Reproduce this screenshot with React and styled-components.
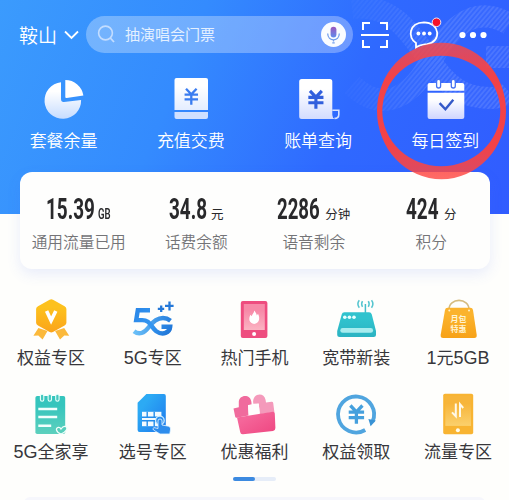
import React from "react"
import styled, { createGlobalStyle } from "styled-components"

const GlobalStyle = createGlobalStyle`
  * {
    box-sizing: border-box;
  }

  body {
    margin: 0;
    overflow: hidden;
    background: #fefefc;
    font-family: "Noto Sans CJK SC", sans-serif;
  }
`

const Page = styled.div`
  width: 509px;
  height: 500px;
  position: relative;
  overflow: hidden;
  background: #fefefc;
`

const Header = styled.header`
  height: 214px;
  position: relative;
  background: linear-gradient(112deg, #3b9bfd 0%, #348bfe 35%, #2f69ff 66%, #315cff 100%);
`

const HeaderArt = styled.svg`
  position: absolute;
  top: 0;
  right: 0;
`

const TopBar = styled.div`
  height: 69px;
  position: relative;
  display: flex;
  align-items: center;
  padding: 0 20px 0 19px;
`

const City = styled.div`
  display: flex;
  align-items: center;
  gap: 7px;
  width: 67px;
  color: #fff;
  font-size: 19px;
  font-weight: 350;
  line-height: 28px;
`

const SearchBox = styled.div`
  width: 267px;
  height: 37px;
  display: flex;
  align-items: center;
  padding: 0 7px 0 11px;
  border-radius: 19px;
  background: rgba(255, 255, 255, 0.3);
`

const SearchText = styled.span`
  flex: 1;
  margin: -2px 0 0 9px;
  color: #e4f0ff;
  font-size: 15px;
  line-height: 22px;
`

const Tools = styled.div`
  display: flex;
  align-items: center;
  margin-left: 8px;

  svg {
    display: block;
    overflow: visible;
  }
`

const Actions = styled.nav`
  position: relative;
  display: grid;
  grid-template-columns: repeat(4, 1fr);
  padding-top: 8px;
`

const Item = styled.div`
  display: flex;
  flex-direction: column;
  align-items: center;

  svg {
    display: block;
    overflow: visible;
  }
`

const ItemLabel = styled.span`
  margin-top: ${({ $gap }) => $gap}px;
  color: ${({ $light }) => ($light ? "#fff" : "#37373b")};
  font-size: 17px;
  font-weight: ${({ $light }) => ($light ? 350 : 400)};
  line-height: 24px;
  white-space: nowrap;

  b {
    font-family: "Liberation Sans", sans-serif;
    font-size: 18px;
    font-weight: 400;
  }
`

const Usage = styled.section`
  position: relative;
  display: grid;
  grid-template-columns: repeat(4, 1fr);
  width: 470px;
  height: 97px;
  margin: -42px 0 0 20px;
  padding-top: 22px;
  border-radius: 12px;
  background: #fefefd;
  box-shadow: 0 5px 14px rgba(70, 110, 240, 0.12);
`

const Stat = styled.div`
  display: flex;
  flex-direction: column;
  align-items: center;
`

const StatValue = styled.div`
  display: flex;
  align-items: baseline;
  gap: 5px;
  height: 30px;
  color: #29292b;
`

const Amount = styled.span`
  width: ${({ $width }) => $width}px;
  font-family: "Roboto", sans-serif;
  font-size: 30px;
  font-weight: 700;
  line-height: 30px;
  white-space: nowrap;

  span {
    display: inline-block;
    transform: scaleX(${({ $scale }) => $scale});
    transform-origin: left;
  }
`

const Unit = styled.span`
  width: ${({ $latin }) => ($latin ? "13px" : "auto")};
  font-family: ${({ $latin }) => ($latin ? "Roboto" : '"Noto Sans CJK SC"')}, sans-serif;
  font-size: ${({ $latin }) => ($latin ? 15 : 12.5)}px;
  font-weight: ${({ $latin }) => ($latin ? 600 : 400)};
  line-height: 20px;

  span {
    display: inline-block;
    transform: ${({ $latin }) => ($latin ? "scaleX(0.64)" : "none")};
    transform-origin: left;
  }
`

const StatLabel = styled.span`
  margin-top: 7px;
  color: #747477;
  font-size: 15.7px;
  font-weight: 350;
  line-height: 22px;
`

const Services = styled.section`
  display: grid;
  grid-template-columns: repeat(5, 1fr);
  grid-auto-rows: 93px;
  row-gap: 1px;
  margin-top: 29px;
`

const Pager = styled.div`
  width: 43px;
  height: 4px;
  margin: -8px auto 0;
  border-radius: 2px;
  background: #e6edf8;

  &::before {
    content: "";
    display: block;
    width: 22px;
    height: 4px;
    border-radius: 2px;
    background: #3c8ae0;
  }
`

const NextPanel = styled.div`
  height: 20px;
  margin: 16px 24px 0;
  border-radius: 6px;
  background: #f6f7fc;
`

const Ring = styled.svg`
  position: absolute;
  left: 374px;
  top: 38px;
`

const Yen = ({ x, y, size = 1, color, width = 2.4 }) => (
  <path
    transform={`translate(${x} ${y}) scale(${size})`}
    d="M-5.5 -8 L0 -2.2 L5.5 -8 M-7 -2 H7 M-7 3 H7 M0 -2 V8.5"
    fill="none"
    stroke={color}
    strokeWidth={width}
  />
)

const Icon = ({ children }) => (
  <svg width="44" height="44" viewBox="0 0 44 44">
    {children}
  </svg>
)

const Gradient = ({ id, from, to, diagonal }) => (
  <linearGradient id={id} x1="0" y1="0" x2={diagonal ? 1 : 0} y2="1">
    <stop offset="0.25" stopColor={from} />
    <stop offset="1" stopColor={to} />
  </linearGradient>
)

const PieIcon = () => (
  <Icon>
    <Gradient id="pie" from="#fff" to="#c6dcff" />
    <path d="M19 5.3A18.3 18.3 0 1 0 39.1 23L22 25Q19 25.3 19 22Z" fill="url(#pie)" />
    <path d="M23.3 3A18.3 18.3 0 0 1 41.4 18.6L24.6 21Q23.3 21.2 23.3 20Z" fill="#fff" />
  </Icon>
)

const RechargeIcon = () => (
  <Icon>
    <Gradient id="recharge" from="#fff" to="#e4edff" />
    <path d="M7.5 1H37Q39 1 39 3V33H5.5V3Q5.5 1 7.5 1Z" fill="url(#recharge)" />
    <path d="M5.5 35H39V40Q39 42 37 42H7.5Q5.5 42 5.5 40Z" fill="#d0e0ff" />
    <Yen x={22.3} y={19.5} color="#3a7cf0" size={0.96} />
  </Icon>
)

const BillIcon = () => (
  <Icon>
    <Gradient id="bill" from="#fff" to="#d3dcff" />
    <path
      d="M36.3 33.2H42.8V37.5Q42.8 41.4 38.5 41.4"
      fill="none"
      stroke="#d5e1ff"
      strokeWidth="1.6"
    />
    <path
      d="M5.7 2H33.8Q36.3 2 36.3 4.5V38Q36.3 41 39 42H5.7Q3.2 42 3.2 39.5V4.5Q3.2 2 5.7 2Z"
      fill="url(#bill)"
    />
    <Yen x={19.9} y={22.5} color="#315fdd" size={1.08} width={2.9} />
  </Icon>
)

const CheckInIcon = () => (
  <Icon>
    <Gradient id="checkin" from="#fff" to="#cfd5ff" />
    <path d="M6.7 6H39.2Q41.3 6 41.3 8V13.7H4.6V8Q4.6 6 6.7 6Z" fill="#fff" />
    <path d="M4.6 15.8H41.3V40Q41.3 42 39.2 42H6.7Q4.6 42 4.6 40Z" fill="url(#checkin)" />
    {[15.6, 30.3].map(x => (
      <rect
        key={x}
        x={x - 2}
        y="2.4"
        width="4"
        height="8.6"
        rx="2"
        fill="#fff"
        stroke="#4773f2"
        strokeWidth="1.3"
      />
    ))}
    <path d="M16.6 26.2L22.4 32.3L30.3 22.7" fill="none" stroke="#3459c8" strokeWidth="2.4" />
  </Icon>
)

const MedalIcon = () => (
  <Icon>
    <Gradient id="medal" from="#fdc11d" to="#fba41a" />
    <path d="M9.4 30L4.4 37.7L9.3 37.5L13.6 41.5L18.5 33Z" fill="#fbb93b" />
    <path d="M35.2 30L40.2 37.7L35.3 37.5L31 41.5L26.1 33Z" fill="#fbb93b" />
    <path
      d="M20.6 1.7Q22.3 .7 24 1.7L35.6 8.2Q37.4 9.2 37.4 11V24.8Q37.4 26.6 35.6 27.6L24 34.1Q22.3 35 20.6 34.1L9 27.6Q7.1 26.6 7.1 24.8V11Q7.1 9.2 9 8.2Z"
      fill="url(#medal)"
    />
    <path d="M17.6 13L22.1 22.6L26.8 13" fill="none" stroke="#fff" strokeWidth="3.6" />
  </Icon>
)

const FiveGIcon = () => (
  <Icon>
    <defs>
      <linearGradient id="fiveg" x1="0" y1="0" x2="44" y2="30" gradientUnits="userSpaceOnUse">
        <stop offset="0" stopColor="#2580e4" />
        <stop offset="0.6" stopColor="#3597f1" />
        <stop offset="1" stopColor="#1f74d5" />
      </linearGradient>
      <linearGradient id="loop" x1="2" y1="0" x2="40" y2="0" gradientUnits="userSpaceOnUse">
        <stop offset="0" stopColor="#6dc2f8" />
        <stop offset="1" stopColor="#267fdf" />
      </linearGradient>
    </defs>
    <g fill="none" strokeWidth="4.4">
      <path
        d="M3 33.2C8 37.3 13.2 35.2 17.7 29.2C22 23.4 26.5 20 32 20C35 20 37 20.8 39.5 22.8"
        stroke="url(#loop)"
      />
      <path
        d="M19 12.2H6.8L5.2 22.1H10.5C19 21.6 20 29.2 25.3 33.2C32 38 38.7 34.4 39.2 28.7H30.5"
        stroke="url(#fiveg)"
      />
    </g>
    <path
      d="M26.8 10.8H33.2M30.2 7.5V14M34 7.8H42.6M38.5 3.6V12.4"
      fill="none"
      stroke="#2478d8"
      strokeWidth="2.3"
    />
  </Icon>
)

const PhoneIcon = () => (
  <Icon>
    <Gradient id="screen" from="#f78aa8" to="#fbb3c2" />
    <rect x="8.8" y="3" width="26.6" height="37" rx="2" fill="#ee4d7f" />
    <rect x="11.8" y="6" width="21" height="26" fill="url(#screen)" />
    <circle cx="22.1" cy="36" r="2" fill="#fff" />
    <path
      d="M22.3 12.6C23.2 14.2 24.5 15.2 24.8 17.4L26 15.8C28.5 20.5 27 25.6 22.2 26C17.2 25.5 16.2 20.7 18.5 16.8L19.8 18.3C20.2 16.2 22 15.2 22.3 12.6Z"
      fill="#fff"
    />
  </Icon>
)

const RouterIcon = () => (
  <Icon>
    <Gradient id="router" from="#30c3ce" to="#2bb3c2" />
    <path d="M31.4 6V15" stroke="#43bdc9" strokeWidth="1.5" />
    <path
      d="M28.5 3.2Q26.8 6 28.5 8.8M25.3 2.3Q22.5 6 25.3 9.7M34.3 3.2Q36 6 34.3 8.8M37.5 2.3Q40.3 6 37.5 9.7"
      fill="none"
      stroke="#55c5cf"
      strokeWidth="1.5"
    />
    <path
      d="M10.4 14.3H35Q37.2 14.3 37.8 16.5L42 33V36.5Q42 39 39.5 39H5.7Q3.2 39 3.2 36.5V33L7.7 16.5Q8.3 14.3 10.4 14.3Z"
      fill="url(#router)"
    />
    <rect x="6.3" y="30" width="32.8" height="4.8" rx="2.4" fill="#a7ecee" />
    {[10.8, 15.4, 20].map(x => (
      <circle key={x} cx={x} cy="19.3" r="1.8" fill="#e8ffff" />
    ))}
  </Icon>
)

const BagText = styled.text`
  fill: #fff4d2;
  font-size: 8px;
  font-weight: 700;
  text-anchor: middle;
`

const BagIcon = () => (
  <Icon>
    <Gradient id="bag" from="#fbb32d" to="#f7a218" />
    <path d="M13 12C12.5 -.8 33.5 -.8 33 12" fill="none" stroke="#d5bb7e" strokeWidth="1.6" />
    <path
      d="M11.5 9.7H34.4Q36.5 9.7 37 12L40.7 36.8Q41 40 38.3 40H7.2Q4.2 40 4.7 36.8L9 12Q9.4 9.7 11.5 9.7Z"
      fill="url(#bag)"
    />
    <circle cx="13.3" cy="12.5" r="1" fill="#fff2c8" />
    <circle cx="33" cy="12.5" r="1" fill="#fff2c8" />
    <BagText x="22.4" y="23.9">月包</BagText>
    <BagText x="22.4" y="34">特惠</BagText>
  </Icon>
)

const NotebookIcon = () => (
  <Icon>
    <Gradient id="notebook" from="#35c5bd" to="#5dd0bd" />
    <rect x="6.4" y="4" width="29.8" height="38" rx="1.8" fill="url(#notebook)" />
    {[13.1, 20.8, 28.4].map(x => (
      <rect
        key={x}
        x={x - 1.7}
        y="2.2"
        width="3.4"
        height="7"
        rx="1.7"
        fill="#45c8bf"
        stroke="#e8fffb"
        strokeWidth="1.1"
      />
    ))}
    <path d="M9.3 17H28.2M9.3 25H28.2M9.3 33.7H22.2" stroke="#f2fffd" strokeWidth="2.4" />
    <path
      d="M32 42C26.5 40 26.5 35.8 29.3 35.4Q31.2 35.2 32 37Q34.5 33.4 37 34.8C39.5 36.5 36.5 40 32 42Z"
      fill="#58cebb"
      stroke="#f3fffc"
      strokeWidth="1.3"
    />
  </Icon>
)

const SimIcon = () => (
  <Icon>
    <Gradient id="sim" from="#2caaf4" to="#1d78ed" diagonal />
    <path
      d="M15.4 2H33Q34.8 2 34.8 4V40H8.5Q6.6 40 6.6 38V10.8Z"
      fill="url(#sim)"
    />
    <rect x="11" y="19.8" width="19.4" height="14.4" fill="#f2fbff" />
    <path
      d="M11 25.2H30.4M11 28.8H30.4M16.2 19.8V25.2M23.2 19.8V25.2M16.2 28.8V34.2M23.2 28.8V34.2"
      stroke="#238dec"
      strokeWidth="1.4"
    />
    <circle cx="28.9" cy="28.4" r="4.3" fill="#2d91ef" stroke="#d3efff" strokeWidth="1.2" />
    <path
      d="M27 29Q27 27 29 27Q31 27 31 29V33L37.5 34.2Q39.7 34.8 39.6 37L38.8 42H29L22.5 38Q21 36.5 23 35.6L27 36.5Z"
      fill="#2d8cec"
      stroke="#eaf7ff"
      strokeWidth="0.8"
    />
  </Icon>
)

const GiftIcon = () => (
  <Icon>
    <Gradient id="gift" from="#f5669a" to="#ee4680" diagonal />
    <path
      d="M1.5 16.5L6.8 15.2V10C6.8 2.2 18.8 1.6 19.4 10L19.6 12.5L16 13.2L16.4 23.6L4.8 25.8Q3.5 26 3.2 24.7Z"
      fill="#f06b9d"
    />
    <path
      d="M21.3 11.8C19.5 1.5 32 -.7 33.6 8L34 10.5L39.5 9.7Q41 9.5 41.2 11L42.4 20L27.8 22.2L26.7 11.6Z"
      fill="#f49abb"
    />
    <path d="M16 13L26.7 11.8L27.8 21.5L17 22.7Z" fill="#fffdfd" />
    <path
      d="M5 25.5L40.8 19.8Q42.8 19.6 42.8 21.5L43.4 36Q43.4 38.5 41 39L11 42.3Q8.5 42.5 8.2 40Z"
      fill="url(#gift)"
    />
  </Icon>
)

const CashbackIcon = () => (
  <Icon>
    <path
      d="M31.2 38A18 18 0 1 1 38.6 29.6"
      fill="none"
      stroke="#50a5df"
      strokeWidth="3.8"
    />
    <path d="M34.4 27L41.8 28.4L36.6 34.2Z" fill="#3993d5" />
    <Yen x={22.4} y={22.3} color="#45a0dd" size={1.1} width={3} />
  </Icon>
)

const DataIcon = () => (
  <Icon>
    <Gradient id="data" from="#f7b53a" to="#fbd06c" />
    <rect x="7.2" y="1.8" width="30" height="40.5" rx="1.8" fill="#f8b432" />
    <rect x="9.3" y="3.9" width="25.7" height="30" fill="url(#data)" />
    <circle cx="21.9" cy="38.3" r="2" fill="#fffceb" />
    <path
      d="M19.8 11.5V24.3L16 20.4M24 25V12.2L27.2 16"
      fill="none"
      stroke="#fff9e8"
      strokeWidth="2"
    />
  </Icon>
)

const actions = [
  { label: "套餐余量", icon: PieIcon },
  { label: "充值交费", icon: RechargeIcon },
  { label: "账单查询", icon: BillIcon },
  { label: "每日签到", icon: CheckInIcon },
]

const stats = [
  { amount: "15.39", unit: "GB", label: "通用流量已用", width: 47, scale: 0.63 },
  { amount: "34.8", unit: "元", label: "话费余额", width: 37, scale: 0.63 },
  { amount: "2286", unit: "分钟", label: "语音剩余", width: 43, scale: 0.62 },
  { amount: "424", unit: "分", label: "积分", width: 33, scale: 0.63 },
]

const services = [
  { label: "权益专区", icon: MedalIcon },
  { label: <><b>5G</b>专区</>, icon: FiveGIcon },
  { label: "热门手机", icon: PhoneIcon },
  { label: "宽带新装", icon: RouterIcon },
  { label: <><b>1</b>元<b>5GB</b></>, icon: BagIcon },
  { label: <><b>5G</b>全家享</>, icon: NotebookIcon },
  { label: "选号专区", icon: SimIcon },
  { label: "优惠福利", icon: GiftIcon },
  { label: "权益领取", icon: CashbackIcon },
  { label: "流量专区", icon: DataIcon },
]

const App = () => (
  <Page>
    <GlobalStyle />
    <Header>
      <HeaderArt width="179" height="120" viewBox="330 0 179 120">
        <defs>
          <pattern
            id="stripes"
            width="3.6"
            height="4"
            patternUnits="userSpaceOnUse"
            patternTransform="rotate(40)"
          >
            <rect width="1.8" height="4" fill="#fff" />
          </pattern>
          <linearGradient id="fade" x1="340" y1="0" x2="440" y2="0" gradientUnits="userSpaceOnUse">
            <stop offset="0" stopColor="#fff" stopOpacity="0.1" />
            <stop offset="1" stopColor="#fff" />
          </linearGradient>
          <mask id="artMask" maskUnits="userSpaceOnUse" x="330" y="0" width="179" height="120">
            <rect x="330" y="0" width="179" height="120" fill="url(#fade)" />
          </mask>
        </defs>
        <g fill="none" strokeWidth="22" mask="url(#artMask)">
          <g stroke="#fff" opacity="0.035">
            <path d="M352 8C392 4 408 30 428 58C448 88 465 98 490 98Q502 98 509 92" />
            <path d="M352 85C380 112 408 100 428 66C450 25 475 4 509 24M486 57H509" />
          </g>
          <g stroke="url(#stripes)" opacity="0.1">
            <path d="M352 8C392 4 408 30 428 58C448 88 465 98 490 98Q502 98 509 92" />
            <path d="M352 85C380 112 408 100 428 66C450 25 475 4 509 24M486 57H509" />
          </g>
        </g>
      </HeaderArt>
      <TopBar>
        <City>
          鞍山
          <svg width="15" height="10" viewBox="0 0 15 10">
            <path d="M1 1.5L7.5 8L14 1.5" fill="none" stroke="#fff" strokeWidth="1.8" />
          </svg>
        </City>
        <SearchBox>
          <svg width="19" height="19" viewBox="0 0 19 19">
            <circle cx="8.5" cy="8" r="6.9" fill="none" stroke="#c3ddff" strokeWidth="1.6" />
            <path d="M13.3 13L17 17" stroke="#c3ddff" strokeWidth="1.8" />
          </svg>
          <SearchText>抽演唱会门票</SearchText>
          <svg width="25" height="25" viewBox="0 0 25 25">
            <linearGradient id="mic" x1="0" y1="0" x2="0" y2="1">
              <stop offset="0" stopColor="#9b55bd" />
              <stop offset="1" stopColor="#608cec" />
            </linearGradient>
            <circle cx="12.5" cy="12.5" r="12.5" fill="#fafcff" />
            <rect x="9.6" y="4.7" width="5.8" height="10.8" rx="2.9" fill="url(#mic)" />
            <path
              d="M6.7 11.5C6.8 20 18.2 20 18.3 11.5M12.5 18V19.5M11.3 20.8H13.7"
              fill="none"
              stroke="#719deb"
              strokeWidth="1.3"
            />
          </svg>
        </SearchBox>
        <Tools>
          <svg width="28" height="28" viewBox="0 0 28 28">
            <path
              d="M2 9V2H9M19 2H26V9M2 19V26H9M19 26H26V19M0 14H28"
              fill="none"
              stroke="#fff"
              strokeWidth="2"
            />
          </svg>
          <svg width="32" height="32" viewBox="0 1 32 32" style={{ marginLeft: 19 }}>
            <path
              d="M8 29.5V25C-.5 20 .5 4.7 16 4.3C31.8 4.5 34.2 23.5 19.2 26.2C15 26.5 11.5 26.8 8 29.5Z"
              fill="none"
              stroke="#fff"
              strokeWidth="1.8"
            />
            <g fill="#fff">
              <circle cx="10.4" cy="15.5" r="1.9" />
              <circle cx="16" cy="15.5" r="1.9" />
              <circle cx="21.7" cy="15.5" r="1.9" />
            </g>
            <circle cx="28.5" cy="4.3" r="4.3" fill="#f5122b" stroke="#e7e7fc" strokeWidth="1" />
          </svg>
          <svg width="28" height="8" viewBox="0 0 28 8" style={{ marginLeft: 19 }}>
            <g fill="#fff">
              <circle cx="3.5" cy="4" r="3.1" />
              <circle cx="14" cy="4" r="3.1" />
              <circle cx="24.5" cy="4" r="3.1" />
            </g>
          </svg>
        </Tools>
      </TopBar>
      <Actions>
        {actions.map(({ label, icon: ActionIcon }) => (
          <Item key={label}>
            <ActionIcon />
            <ItemLabel $light $gap={7}>
              {label}
            </ItemLabel>
          </Item>
        ))}
      </Actions>
    </Header>
    <Usage>
      {stats.map(({ amount, unit, label, width, scale }) => (
        <Stat key={label}>
          <StatValue>
            <Amount $width={width} $scale={scale}>
              <span>{amount}</span>
            </Amount>
            <Unit $latin={unit === "GB"}>
              <span>{unit}</span>
            </Unit>
          </StatValue>
          <StatLabel>{label}</StatLabel>
        </Stat>
      ))}
    </Usage>
    <Services>
      {services.map(({ label, icon: ServiceIcon }, index) => (
        <Item key={index}>
          <ServiceIcon />
          <ItemLabel $gap={3}>{label}</ItemLabel>
        </Item>
      ))}
    </Services>
    <Pager />
    <NextPanel />
    <Ring width="135" height="145" viewBox="374 38 135 145">
      <linearGradient id="ring" x1="0" y1="0" x2="0" y2="1">
        <stop offset="0" stopColor="#ff4742" stopOpacity="0.78" />
        <stop offset="0.25" stopColor="#ff403c" stopOpacity="0.94" />
        <stop offset="0.75" stopColor="#ff403c" stopOpacity="0.94" />
        <stop offset="1" stopColor="#ff4742" stopOpacity="0.8" />
      </linearGradient>
      <path
        fillRule="evenodd"
        d="M377 111A64.5 68.2 0 0 1 506 111A64.5 68.2 0 0 1 377 111ZM382.3 111A59 55.2 0 0 1 500.3 111A59 55.2 0 0 1 382.3 111Z"
        fill="url(#ring)"
      />
    </Ring>
  </Page>
)

export default App
